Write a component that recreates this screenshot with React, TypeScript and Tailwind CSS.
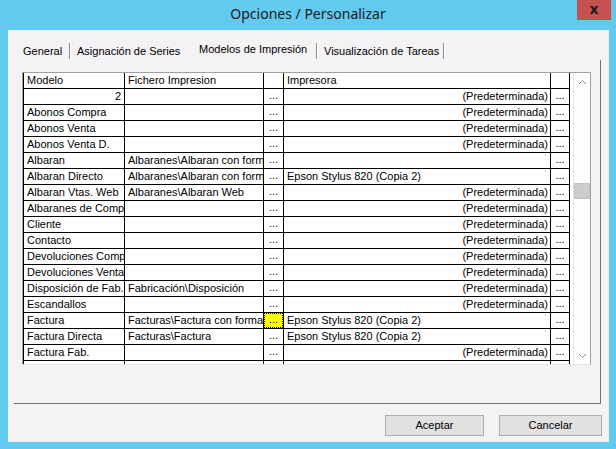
import React from "react";

type Row = { m: string; f: string; p: string; right?: boolean; hl?: boolean };

const PRED = "(Predeterminada)";
const EPSON = "Epson Stylus 820 (Copia 2)";

const rows: Row[] = [
  { m: "2", f: "", p: PRED, right: true },
  { m: "Abonos Compra", f: "", p: PRED },
  { m: "Abonos Venta", f: "", p: PRED },
  { m: "Abonos Venta D.", f: "", p: PRED },
  { m: "Albaran", f: "Albaranes\\Albaran con formato", p: "" },
  { m: "Albaran Directo", f: "Albaranes\\Albaran con formato", p: EPSON },
  { m: "Albaran Vtas. Web", f: "Albaranes\\Albaran Web", p: PRED },
  { m: "Albaranes de Compras", f: "", p: PRED },
  { m: "Cliente", f: "", p: PRED },
  { m: "Contacto", f: "", p: PRED },
  { m: "Devoluciones Compras", f: "", p: PRED },
  { m: "Devoluciones Ventas", f: "", p: PRED },
  { m: "Disposición de Fab.", f: "Fabricación\\Disposición", p: PRED },
  { m: "Escandallos", f: "", p: PRED },
  { m: "Factura", f: "Facturas\\Factura con formato", p: EPSON, hl: true },
  { m: "Factura Directa", f: "Facturas\\Factura", p: EPSON },
  { m: "Factura Fab.", f: "", p: PRED },
  { m: "", f: "", p: "" },
];

const font = { fontFamily: '"Liberation Sans", Arial, sans-serif' };

function Dots({ hl, w }: { hl?: boolean; w: string }) {
  return (
    <div className={`${w} shrink-0 h-full border-r border-black flex items-center justify-center`}>
      <div
        className={`h-full w-full flex items-end justify-center leading-none pb-[3px] text-[11px] ${
          hl ? "bg-[#ffff00] outline-1 outline-dotted outline-black -outline-offset-1" : ""
        }`}
      >
        ...
      </div>
    </div>
  );
}

function GridRow({ r }: { r: Row }) {
  return (
    <div className="flex h-[16px] border-b border-black">
      <div
        className={`w-[102px] shrink-0 border-l border-r border-black overflow-hidden whitespace-nowrap px-[3px] flex items-center ${
          r.right ? "justify-end" : ""
        }`}
      >
        {r.m}
      </div>
      <div className="w-[139px] shrink-0 border-r border-black overflow-hidden whitespace-nowrap pl-[3px] flex items-center">
        {r.f}
      </div>
      <Dots w="w-[20px]" hl={r.hl} />
      <div
        className={`w-[267px] shrink-0 border-r border-black overflow-hidden whitespace-nowrap flex items-center ${
          r.p === PRED ? "justify-end pr-[2px]" : "pl-[3px]"
        }`}
      >
        {r.p}
      </div>
      <Dots w="w-[19px]" />
    </div>
  );
}

function Sep() {
  return <div className="w-[2px] h-[16px] shrink-0 border-l border-[#8c8c8c] border-r border-r-white" />;
}

export default function App() {
  return (
    <div className="w-[616px] h-[449px] bg-[#62c9ef] flex flex-col text-black" style={font}>
      {/* title bar */}
      <div className="h-[30px] relative flex items-center justify-center shrink-0">
        <span
          className="text-[14px] text-[#1b1b1b] -mt-[3px]"
          style={{ fontFamily: '"Noto Sans", "Open Sans", sans-serif' }}
        >
          Opciones / Personalizar
        </span>
        <div className="absolute right-[5px] top-0 w-[34px] h-[20px] bg-[#c75050] flex items-center justify-center">
          <span className="text-[14px] font-bold leading-none text-[#1a1a1a] -mt-[2px]" style={{ fontFamily: '"DejaVu Sans", sans-serif' }}>
            x
          </span>
        </div>
      </div>

      {/* client area */}
      <div className="ml-[8px] w-[601px] h-[412px] bg-[#f5f2f5] flex flex-col text-[11px]">
        {/* tabs */}
        <div className="h-[30px] flex items-center pt-[12px] shrink-0">
          <div className="w-[15px] shrink-0" />
          <div className="w-[46px] shrink-0 whitespace-nowrap">General</div>
          <Sep />
          <div className="w-[6px] shrink-0" />
          <div className="w-[122px] shrink-0 whitespace-nowrap">Asignación de Series</div>
          <div className="w-[117px] shrink-0 whitespace-nowrap -mt-[3px]">Modelos de Impresión</div>
          <Sep />
          <div className="w-[6px] shrink-0" />
          <div className="w-[119px] shrink-0 whitespace-nowrap">Visualización de Tareas</div>
          <Sep />
        </div>

        {/* panel */}
        <div className="ml-[6px] w-[587px] h-[344px] border-r border-b border-[#6f6f6f] pt-[12px] pl-[8px] shrink-0">
          <div className="w-[569px] h-[293px] border border-[#a0a0a0] border-b-[#e3e3e3] bg-white flex overflow-hidden">
            <div className="w-[547px] shrink-0 flex flex-col overflow-hidden">
              <div className="flex h-[16px] border-b border-black shrink-0">
                <div className="w-[102px] shrink-0 border-l border-r border-black pl-[3px] flex items-center">Modelo</div>
                <div className="w-[139px] shrink-0 border-r border-black pl-[3px] flex items-center">Fichero Impresion</div>
                <div className="w-[20px] shrink-0 border-r border-black" />
                <div className="w-[267px] shrink-0 border-r border-black pl-[3px] flex items-center">Impresora</div>
                <div className="w-[19px] shrink-0 border-r border-black" />
              </div>
              {rows.map((r, i) => (
                <GridRow key={i} r={r} />
              ))}
            </div>
            <div className="w-[3px] shrink-0" />
            {/* scrollbar */}
            <div className="w-[17px] shrink-0 h-full border-l border-[#e6e6e6] bg-[#fdfdfd] flex flex-col">
              <div className="h-[17px] flex items-center justify-center shrink-0">
                <svg width="9" height="6" viewBox="0 0 9 6">
                  <path d="M1 5 L4.5 1.5 L8 5" fill="none" stroke="#8a8a8a" strokeWidth="1" />
                </svg>
              </div>
              <div className="h-[93px] shrink-0" />
              <div className="h-[16px] bg-[#cdcdcd] border border-[#c2c2c2] shrink-0" />
              <div className="flex-1" />
              <div className="h-[17px] flex items-center justify-center shrink-0">
                <svg width="9" height="6" viewBox="0 0 9 6">
                  <path d="M1 1 L4.5 4.5 L8 1" fill="none" stroke="#8a8a8a" strokeWidth="1" />
                </svg>
              </div>
            </div>
          </div>
        </div>

        {/* buttons */}
        <div className="flex justify-end gap-[15px] pr-[7px] mt-[11px]">
          <button className="w-[99px] h-[21px] bg-[#e1e1e1] border border-[#adadad] text-[11px] flex items-center justify-center">
            Aceptar
          </button>
          <button className="w-[103px] h-[21px] bg-[#e1e1e1] border border-[#adadad] text-[11px] flex items-center justify-center">
            Cancelar
          </button>
        </div>
      </div>
    </div>
  );
}
